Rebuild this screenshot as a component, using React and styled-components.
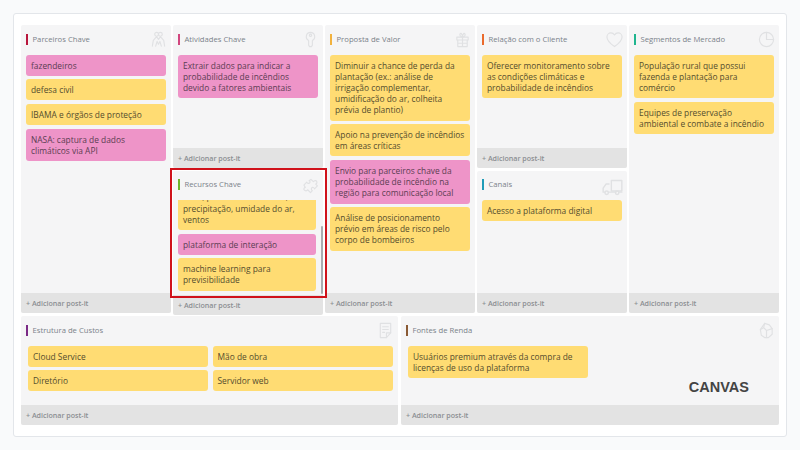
import React, { useLayoutEffect, useRef } from 'react';
import styled, { createGlobalStyle } from 'styled-components';

const GlobalStyle = createGlobalStyle`
  html, body { margin: 0; padding: 0; background: #f9fafb; }
  * { box-sizing: border-box; }
  body { font-family: "Open Sans", sans-serif; }
`;

const Page = styled.div`
  width: 800px;
  height: 450px;
  padding: 13px;
  overflow: hidden;
`;

const Board = styled.div`
  position: relative;
  width: 774px;
  height: 424px;
  padding: 11px 7.5px 11px 7px;
  display: flex;
  flex-direction: column;
  gap: 3px;
  background: #fff;
  border: 1px solid #e3e6ea;
  border-radius: 3px;
`;

const TopRow = styled.div`
  height: 288px;
  display: grid;
  grid-template-columns: repeat(5, 1fr);
  gap: 2.5px;
`;

const BottomRow = styled.div`
  height: 109px;
  display: grid;
  grid-template-columns: 377px 377.5px;
  gap: 3px;
`;

const Stack = styled.div`
  min-height: 0;
  display: grid;
  grid-template-rows: 143px 142.5px;
  gap: 2.5px;
`;

const Block = styled.section`
  position: relative;
  min-height: 0;
  display: flex;
  flex-direction: column;
  background: #f5f5f6;
  border-radius: 2px;
`;

const Header = styled.div`
  height: 29.5px;
  flex: none;
  padding: 8.5px 4px 0 4.5px;
  display: flex;
  align-items: flex-start;
  justify-content: space-between;
`;

const Title = styled.h3`
  margin: 0;
  padding-left: 5px;
  height: 11px;
  border-left: 2px solid ${({ $color }) => $color};
  font-size: 7.7px;
  font-weight: 400;
  line-height: 11px;
  color: #7b828a;
  white-space: nowrap;
`;

const IconSlot = styled.svg`
  flex: none;
  width: ${({ $size }) => $size}px;
  height: ${({ $size }) => $size}px;
  margin-top: -2.5px;
  fill: none;
  stroke: #e0e1e3;
  stroke-width: 1.2;
  stroke-linecap: round;
  stroke-linejoin: round;
`;

const Notes = styled.div`
  flex: 1;
  min-height: 0;
  padding: 0 4.5px 0 5px;
  display: flex;
  flex-direction: column;
  gap: 3.5px;
`;

const WideNotes = styled.div`
  flex: 1;
  min-height: 0;
  padding: 0 7px;
  display: grid;
  grid-template-columns: repeat(2, 180px);
  grid-auto-rows: max-content;
  gap: 3.5px 4.5px;
`;

const ScrollNotes = styled(Notes)`
  flex: none;
  height: 95px;
  padding: 0 6.5px 4.5px 5px;
  overflow-y: scroll;
  scrollbar-width: none;
`;

const ScrollThumb = styled.div`
  position: absolute;
  top: 55.5px;
  right: -0.5px;
  width: 2px;
  height: 68px;
  background: #a9acb0;
  border-radius: 1px;
`;

const Note = styled.div`
  flex: none;
  padding: 5px;
  border-radius: 3px;
  background: ${({ $pink }) => ($pink ? '#ee94c8' : '#ffdc73')};
  font-size: 8.4px;
  line-height: 11.2px;
  color: ${({ $pink }) => ($pink ? '#5b3d52' : '#544c2e')};
`;

const AddBar = styled.div`
  height: 20px;
  flex: none;
  margin-top: auto;
  padding-left: 5px;
  display: flex;
  align-items: center;
  background: #e3e3e3;
  border-radius: 0 0 2px 2px;
  font-size: 7.1px;
  font-weight: 600;
  color: #8b8e92;
`;

const Highlight = styled.div`
  position: absolute;
  left: 156px;
  top: 154px;
  width: 157px;
  height: 130px;
  border: 2px solid #d0121b;
  pointer-events: none;
`;

const Stamp = styled.div`
  position: absolute;
  right: 37px;
  bottom: 41px;
  font-family: "Liberation Sans", Arial, sans-serif;
  font-size: 14.5px;
  font-weight: 700;
  color: #444;
`;

const icons = {
  handshake: (
    <>
      <circle cx="7" cy="3.5" r="2" />
      <circle cx="11" cy="3.5" r="2" />
      <path d="M2.500 16l1-6 3.500-4 2 3 2-3 3.500 4 1 6" />
      <path d="M6 16l1.500-5 1.500 3 1.500-3 1.500 5" />
    </>
  ),
  key: (
    <>
      <path d="M9 1.500a4.500 4.500 0 0 1 2 8.500v5l-1 1.500H8L7 15v-5A4.500 4.500 0 0 1 9 1.500z" />
      <circle cx="9" cy="4.500" r="1.200" />
    </>
  ),
  gift: (
    <>
      <path d="M3 6.500h12v3H3zM4 9.500h10v7H4zM9 6.500v10M4 13h10" />
      <path d="M9 6.500C7 6 5.500 4.500 6.500 3S9 4 9 6.500c0-2.500 1.500-5 2.500-3.500s-.5 3-2.500 3.500z" />
    </>
  ),
  heart: (
    <path d="M9 16.500C4 13 1 10 1 6.300 1 3.800 3 2 5.200 2 6.800 2 8.200 2.800 9 4.200 9.800 2.800 11.200 2 12.800 2 15 2 17 3.800 17 6.300 17 10 14 13 9 16.500z" />
  ),
  pie: (
    <>
      <circle cx="9" cy="9" r="7.500" />
      <path d="M9 1.500V9h7.500" />
    </>
  ),
  truck: (
    <>
      <path d="M8 3h9v9H8z" />
      <path d="M6 6H3.500L1 9.500V13h1.500M5.500 13H12M14.500 13H17" />
      <circle cx="4" cy="13.500" r="1.500" />
      <circle cx="13" cy="13.500" r="1.500" />
    </>
  ),
  puzzle: (
    <path d="M9.500 2.500l2.500 2.500c1-1.500 3-1.500 3.500-.5s.5 2.500-1 3l1.800 2-3 3c-.5-1.500-2.300-2-3-1s-.5 2.500 .7 3l-2 2-3-3c-1 1.500-2.500 1.500-3.500.5s-.5-2.500 1-3L2 8.500l3-3c.5 1.500 2 1.500 3 .8s.5-2-.5-2.300z" />
  ),
  sheet: (
    <>
      <path d="M3.500 1.500h11v10l-4.500 5h-6.500z" />
      <path d="M10 16.500v-5h4.500M6 5h6M6 8h6M6 11h2" />
    </>
  ),
  coins: (
    <>
      <path d="M7 1.500l5 1.500 3 4v6l-4 3.500H7L3.500 14 2.500 8z" />
      <path d="M7 1.500L6 6l3 3 6-2M9 9v7.500M2.500 8L6 6" />
    </>
  ),
};

const Icon = ({ name, size = 17 }) => (
  <IconSlot viewBox="0 0 18 18" $size={size}>
    {icons[name]}
  </IconSlot>
);

const Card = ({ title, color, icon, iconSize, children }) => (
  <Block>
    <Header>
      <Title $color={color}>{title}</Title>
      <Icon name={icon} size={iconSize} />
    </Header>
    {children}
    <AddBar>+ Adicionar post-it</AddBar>
  </Block>
);

const ScrolledNotes = ({ children }) => {
  const ref = useRef(null);
  useLayoutEffect(() => {
    ref.current.scrollTop = ref.current.scrollHeight;
  }, []);
  return (
    <>
      <ScrollNotes ref={ref}>{children}</ScrollNotes>
      <ScrollThumb />
    </>
  );
};

const App = () => (
  <Page>
    <GlobalStyle />
    <Board>
      <TopRow>
        <Card title="Parceiros Chave" color="#b8163c" icon="handshake">
          <Notes>
            <Note $pink>fazendeiros</Note>
            <Note>defesa civil</Note>
            <Note>IBAMA e órgãos de proteção</Note>
            <Note $pink>NASA: captura de dados climáticos via API</Note>
          </Notes>
        </Card>
        <Stack>
          <Card title="Atividades Chave" color="#d2477f" icon="key">
            <Notes>
              <Note $pink>Extrair dados para indicar a probabilidade de incêndios devido a fatores ambientais</Note>
            </Notes>
          </Card>
          <Card title="Recursos Chave" color="#6fb52c" icon="puzzle">
            <ScrolledNotes>
              <Note>Dados de sensores e de satélite sobre temperatura, focos de calor, pressão atmosférica, precipitação, umidade do ar, ventos</Note>
              <Note $pink>plataforma de interação</Note>
              <Note>machine learning para previsibilidade</Note>
            </ScrolledNotes>
          </Card>
        </Stack>
        <Card title="Proposta de Valor" color="#f2b23e" icon="gift">
          <Notes>
            <Note>Diminuir a chance de perda da plantação (ex.: análise de irrigação complementar, umidificação do ar, colheita prévia de plantio)</Note>
            <Note>Apoio na prevenção de incêndios em áreas críticas</Note>
            <Note $pink>Envio para parceiros chave da probabilidade de incêndio na região para comunicação local</Note>
            <Note>Análise de posicionamento prévio em áreas de risco pelo corpo de bombeiros</Note>
          </Notes>
        </Card>
        <Stack>
          <Card title="Relação com o Cliente" color="#ea6a2c" icon="heart">
            <Notes>
              <Note>Oferecer monitoramento sobre as condições climáticas e probabilidade de incêndios</Note>
            </Notes>
          </Card>
          <Card title="Canais" color="#1f9cb8" icon="truck" iconSize={21}>
            <Notes>
              <Note>Acesso a plataforma digital</Note>
            </Notes>
          </Card>
        </Stack>
        <Card title="Segmentos de Mercado" color="#1fb58f" icon="pie">
          <Notes>
            <Note>População rural que possui fazenda e plantação para comércio</Note>
            <Note>Equipes de preservação ambiental e combate a incêndio</Note>
          </Notes>
        </Card>
      </TopRow>
      <BottomRow>
        <Card title="Estrutura de Custos" color="#7b2a86" icon="sheet">
          <WideNotes>
            <Note>Cloud Service</Note>
            <Note>Mão de obra</Note>
            <Note>Diretório</Note>
            <Note>Servidor web</Note>
          </WideNotes>
        </Card>
        <Card title="Fontes de Renda" color="#8a5a34" icon="coins">
          <WideNotes>
            <Note>Usuários premium através da compra de licenças de uso da plataforma</Note>
          </WideNotes>
        </Card>
      </BottomRow>
      <Stamp>CANVAS</Stamp>
      <Highlight />
    </Board>
  </Page>
);

export default App;
